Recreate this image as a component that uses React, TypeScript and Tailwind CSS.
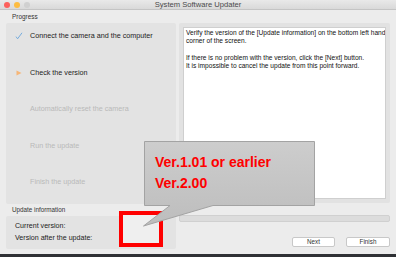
import React from "react";

export default function App() {
  const font = { fontFamily: '"Liberation Sans", Arial, sans-serif' };
  return (
    <div className="relative w-[396px] h-[257px] overflow-hidden bg-[#2f3135]" style={font}>
      <div className="flex flex-col w-[396px] h-[254px] bg-[#ececec]">
        {/* title bar */}
        <div className="relative flex items-center justify-center h-[10px] bg-gradient-to-b from-[#e9e9e9] to-[#d9d9d9] border-b border-[#c4c4c4]">
          <div className="absolute left-[4px] top-[2px] flex gap-[4px]">
            <span className="w-[6px] h-[6px] rounded-full bg-[#fc605c]" />
            <span className="w-[6px] h-[6px] rounded-full bg-[#fdbc40]" />
            <span className="w-[6px] h-[6px] rounded-full bg-[#d0d0d0]" />
          </div>
          <span className="text-[7.6px] leading-none text-[#4a4a4a]">System Software Updater</span>
        </div>

        <div className="flex flex-row">
          {/* left column */}
          <div className="flex flex-col ml-[6px] w-[170px]">
            <div className="h-[13px] flex items-center pl-[6px] text-[6.4px] text-[#333]">Progress</div>
            <div className="h-[181px] bg-[#e3e3e3] rounded-[2px] flex flex-col pt-[9px] gap-[28.5px] text-[7.2px] leading-[8px]">
              <div className="flex items-center">
                <span className="w-[24px] flex justify-center pl-[2px]">
                  <svg width="8" height="8" viewBox="0 0 8 8">
                    <path d="M1 4.6 L2.6 6.8 L7 0.8" fill="none" stroke="#6aa6dc" strokeWidth="0.9" />
                  </svg>
                </span>
                <span className="text-[#222]">Connect the camera and the computer</span>
              </div>
              <div className="flex items-center">
                <span className="w-[24px] flex justify-center pl-[2px]">
                  <svg width="6" height="6" viewBox="0 0 6 6">
                    <path d="M0.5 0.5 L5.5 3 L0.5 5.5 Z" fill="#f6b678" />
                  </svg>
                </span>
                <span className="text-[#222]">Check the version</span>
              </div>
              <div className="flex items-center pl-[24px] text-[#b9b9b9]">Automatically reset the camera</div>
              <div className="flex items-center pl-[24px] text-[#b9b9b9]">Run the update</div>
              <div className="flex items-center pl-[24px] text-[#b9b9b9]">Finish the update</div>
            </div>
            <div className="h-[12px] flex items-center pl-[6px] text-[6.3px] text-[#333]">Update information</div>
            <div className="h-[33px] bg-[#e3e3e3] rounded-[2px] flex flex-col justify-center gap-[5px] pl-[9px] text-[7.1px] leading-[7px] text-[#222]">
              <span>Current version:</span>
              <span>Version after the update:</span>
            </div>
          </div>

          {/* right column */}
          <div className="flex flex-col ml-[3px] w-[211px]">
            <div className="h-[13px]" />
            <div className="h-[180px] bg-[#e2e2e2] rounded-[2px] p-[4px]">
              <div className="h-full bg-white border border-[#cfcfcf] pt-[1px] pl-[2px] text-[6.6px] leading-[8.3px] text-[#111] whitespace-nowrap overflow-hidden">
                <p>Verify the version of the [Update information] on the bottom left hand</p>
                <p>corner of the screen.</p>
                <p>&nbsp;</p>
                <p>If there is no problem with the version, click the [Next] button.</p>
                <p>It is impossible to cancel the update from this point forward.</p>
              </div>
            </div>
            <div className="mt-[12px] h-[7px] bg-[#dcdcdc] border border-[#d0d0d0] rounded-[2px]" />
            <div className="mt-[15px] flex justify-end gap-[11px]">
              <button className="w-[43px] h-[10px] bg-white border border-[#c8c8c8] rounded-[2px] text-[6.3px] leading-none text-[#333] flex items-center justify-center">Next</button>
              <button className="w-[44px] h-[10px] bg-white border border-[#c8c8c8] rounded-[2px] text-[6.3px] leading-none text-[#333] flex items-center justify-center">Finish</button>
            </div>
          </div>
        </div>
      </div>

      {/* red annotation box */}
      <div className="absolute left-[119px] top-[211px] w-[44px] h-[36px] border-[4px] border-[#ff0000] bg-[#efefef]" />

      {/* callout */}
      <svg className="absolute left-[142px] top-[140px]" width="174" height="88" viewBox="0 0 174 88">
        <defs>
          <linearGradient id="cg" x1="0" y1="0" x2="0" y2="1">
            <stop offset="0" stopColor="#cdcdcd" />
            <stop offset="1" stopColor="#bdbdbd" />
          </linearGradient>
        </defs>
        <path d="M2.5 1.5 H172.5 V65.5 H71 L1.5 86 L28 65.5 H2.5 Z" fill="url(#cg)" stroke="#a3a3a3" strokeWidth="1" />
      </svg>
      <div className="absolute left-[155px] top-[152px] flex flex-col text-[14px] leading-[20.5px] font-bold text-[#ff0000]">
        <span>Ver.1.01 or earlier</span>
        <span>Ver.2.00</span>
      </div>
    </div>
  );
}
